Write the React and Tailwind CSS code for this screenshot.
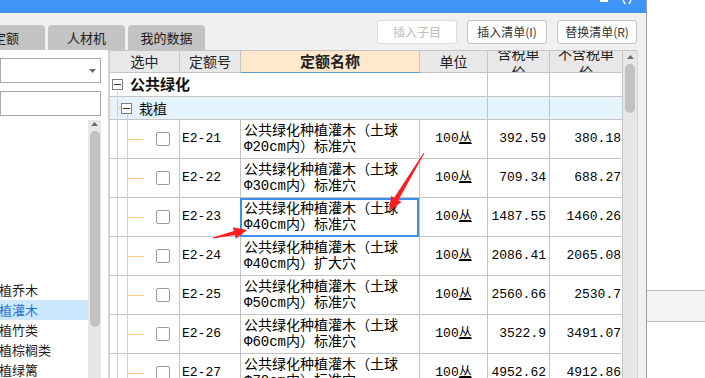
import React from 'react';

const rows = [
  { code: 'E2-21', size: '20', hole: '标准穴', p1: '392.59', p2: '380.18' },
  { code: 'E2-22', size: '30', hole: '标准穴', p1: '709.34', p2: '688.27' },
  { code: 'E2-23', size: '40', hole: '标准穴', p1: '1487.55', p2: '1460.26', selected: true },
  { code: 'E2-24', size: '40', hole: '扩大穴', p1: '2086.41', p2: '2065.08' },
  { code: 'E2-25', size: '50', hole: '标准穴', p1: '2560.66', p2: '2530.7' },
  { code: 'E2-26', size: '60', hole: '标准穴', p1: '3522.9', p2: '3491.07' },
  { code: 'E2-27', size: '70', hole: '标准穴', p1: '4952.62', p2: '4912.86' },
];

const categories = ['植乔木', '植灌木', '植竹类', '植棕榈类', '植绿篱'];

const TREE = '#ffc77d';

function MinusBox() {
  return (
    <div className="w-[11px] h-[11px] border border-[#808080] bg-white flex items-center justify-center">
      <div className="w-[7px] h-px bg-[#333]" />
    </div>
  );
}

function UpArrow() {
  return (
    <svg width="7" height="4" viewBox="0 0 7 4">
      <polygon points="0,4 3.5,0 7,4" fill="#6b6b6b" />
    </svg>
  );
}

function DataRow({ row }) {
  return (
    <div className="flex h-[39px] border-b border-[#c4c4c4] shrink-0">
      <div className="relative w-[70px] border-r border-[#c4c4c4] flex items-center pl-[46px]">
        <svg className="absolute left-0 top-0" width="46" height="39">
          <line x1="7.5" y1="0" x2="7.5" y2="39" stroke={TREE} />
          <line x1="17.5" y1="0" x2="17.5" y2="39" stroke={TREE} />
          <line x1="18" y1="19.5" x2="33" y2="19.5" stroke={TREE} />
        </svg>
        <div className="w-[14px] h-[14px] border border-[#9a9a9a] rounded-[2px] bg-white" />
      </div>
      <div className="w-[61px] border-r border-[#c4c4c4] flex items-center pl-[2px] font-['Liberation_Mono',monospace] text-[13px] text-black">
        {row.code}
      </div>
      <div className="relative w-[179px] border-r border-[#c4c4c4] flex items-center pl-[3px] font-['Liberation_Mono','Noto_Sans_CJK_SC',monospace] text-[14px] leading-[16px] text-black">
        <div>
          公共绿化种植灌木（土球
          <br />
          Φ{row.size}cm内）{row.hole}
        </div>
        {row.selected && (
          <div className="absolute left-[-1px] top-0 right-0 bottom-[-1px] border-2 border-[#3d8ee8]" />
        )}
      </div>
      <div className="w-[68px] border-r border-[#c4c4c4] flex items-center justify-center font-['Liberation_Mono','Noto_Sans_CJK_SC',monospace] text-[13px] text-black">
        100<span className="underline">丛</span>
      </div>
      <div className="w-[62px] border-r border-[#c4c4c4] flex items-center justify-end pr-[3px] font-['Liberation_Mono',monospace] text-[13px] text-black">
        {row.p1}
      </div>
      <div className="w-[73px] border-r border-[#c4c4c4] flex items-center justify-end pr-[1px] font-['Liberation_Mono',monospace] text-[13px] text-black">
        {row.p2}
      </div>
    </div>
  );
}

export default function App() {
  return (
    <div className="relative w-[705px] h-[378px] overflow-hidden bg-white flex font-['Noto_Sans_CJK_SC',sans-serif] text-[#222]">
      {/* dialog */}
      <div className="w-[647px] h-full flex flex-col border-r border-[#9c9c9c] shrink-0">
        {/* title bar */}
        <div className="h-[13px] bg-[#3f95f7] flex justify-end pr-[14px] shrink-0">
          <svg width="32" height="13" viewBox="0 0 32 13">
            <rect x="0" y="0" width="8" height="2" fill="#fff" />
            <line x1="23" y1="0" x2="25" y2="4" stroke="#fff" strokeWidth="1.5" />
            <line x1="31" y1="0" x2="29" y2="4" stroke="#fff" strokeWidth="1.5" />
          </svg>
        </div>

        {/* toolbar */}
        <div className="h-[37px] bg-[#f0f0f0] flex justify-between shrink-0">
          <div className="self-end flex gap-[3px] text-[13px] text-[#1a1a1a]">
            <div className="ml-[-33px] w-[78px] h-[25px] bg-[#c3c3c3] rounded-t-[4px] flex items-center justify-center">定额</div>
            <div className="w-[77px] h-[25px] bg-[#c3c3c3] rounded-t-[4px] flex items-center justify-center">人材机</div>
            <div className="w-[77px] h-[25px] bg-[#c3c3c3] rounded-t-[4px] flex items-center justify-center">我的数据</div>
          </div>
          <div className="self-start mt-[7px] pr-[9px] flex gap-[10px] text-[12px]">
            <div className="w-[80px] h-[24px] border border-[#dedede] rounded-[3px] bg-white flex items-center justify-center text-[#bdbdbd]">插入子目</div>
            <div className="w-[80px] h-[24px] border border-[#c6c6c6] rounded-[3px] bg-white flex items-center justify-center text-[#333]">插入清单(I)</div>
            <div className="w-[80px] h-[24px] border border-[#c6c6c6] rounded-[3px] bg-white flex items-center justify-center text-[#333]">替换清单(R)</div>
          </div>
        </div>

        {/* body */}
        <div className="flex-1 flex min-h-0">
          {/* left panel */}
          <div className="w-[110px] h-full bg-white border-r-2 border-[#d2d2d2] flex flex-col shrink-0">
            <div className="mt-[8px] w-[101px] h-[25px] border border-[#a8a8a8] flex items-center justify-end pr-[4px] shrink-0">
              <svg width="7" height="4" viewBox="0 0 7 4">
                <polygon points="0,0 7,0 3.5,4" fill="#6b6b6b" />
              </svg>
            </div>
            <div className="mt-[8px] w-[101px] h-[25px] border border-[#a8a8a8] shrink-0" />
            <div className="mt-[4px] flex flex-1 min-h-0 w-[101px]">
              <div className="w-[88px] pt-[160px] flex flex-col text-[13px] overflow-hidden">
                {categories.map((c, i) => (
                  <div
                    key={c}
                    className={`h-[20px] shrink-0 flex items-center ml-[-1px] whitespace-nowrap ${i === 1 ? 'bg-[#cce8ff] text-[#1b74d4]' : 'text-[#1a1a1a]'}`}
                  >
                    {c}
                  </div>
                ))}
              </div>
              <div className="w-[13px] bg-[#e7e7e7] flex flex-col items-center pt-[2px]">
                <UpArrow />
                <div className="mt-[5px] w-[10px] h-[196px] rounded-full bg-[#c2c2c2]" />
              </div>
            </div>
          </div>

          {/* grid */}
          <div className="flex-1 flex min-w-0">
            <div className="w-[513px] flex flex-col overflow-hidden shrink-0">
              {/* header */}
              <div className="flex h-[23px] shrink-0 text-[14px] text-[#222]">
                <div className="w-[70px] border-t border-b border-r border-[#c4c4c4] bg-[#e8e8e8] flex items-center justify-center">选中</div>
                <div className="w-[61px] border-t border-b border-r border-[#c4c4c4] bg-[#e8e8e8] flex items-center justify-center">定额号</div>
                <div className="w-[179px] border-t border-r border-[#c4c4c4] border-b border-b-[#5b9bd5] bg-[#ffe8cb] flex items-center justify-center font-bold text-[15px]">定额名称</div>
                <div className="w-[68px] border-t border-b border-r border-[#c4c4c4] bg-[#e8e8e8] flex items-center justify-center">单位</div>
                <div className="w-[62px] border-t border-b border-r border-[#c4c4c4] bg-[#e8e8e8] flex items-center justify-center overflow-hidden leading-[18px] text-center">
                  <div>含税单<br />价</div>
                </div>
                <div className="w-[73px] border-t border-b border-r border-[#c4c4c4] bg-[#e8e8e8] flex items-center justify-center overflow-hidden leading-[18px] text-center">
                  <div>不含税单<br />价</div>
                </div>
              </div>

              {/* group row */}
              <div className="flex h-[24px] border-b border-[#c4c4c4] shrink-0 bg-white">
                <div className="relative w-[378px] border-r border-[#c4c4c4] flex items-center pl-[2px]">
                  <svg className="absolute left-0 top-0" width="20" height="24">
                    <line x1="7.5" y1="18" x2="7.5" y2="24" stroke={TREE} />
                  </svg>
                  <MinusBox />
                  <span className="ml-[7px] font-bold text-[15px] text-[#111]">公共绿化</span>
                </div>
                <div className="w-[62px] border-r border-[#c4c4c4]" />
                <div className="w-[73px] border-r border-[#c4c4c4]" />
              </div>

              {/* sub group row */}
              <div className="flex h-[23px] border-b border-[#c4c4c4] shrink-0 bg-[#e5f3fd]">
                <div className="relative w-[378px] border-r border-[#c4c4c4] flex items-center pl-[11px]">
                  <svg className="absolute left-0 top-0" width="24" height="23">
                    <line x1="7.5" y1="0" x2="7.5" y2="23" stroke={TREE} />
                    <line x1="7" y1="11.5" x2="11" y2="11.5" stroke={TREE} />
                    <line x1="17.5" y1="17" x2="17.5" y2="23" stroke={TREE} />
                  </svg>
                  <MinusBox />
                  <span className="ml-[7px] text-[14px] text-[#111]">栽植</span>
                </div>
                <div className="w-[62px] border-r border-[#c4c4c4]" />
                <div className="w-[73px] border-r border-[#c4c4c4]" />
              </div>

              {rows.map((r) => (
                <DataRow key={r.code} row={r} />
              ))}
            </div>

            {/* vertical scrollbar */}
            <div className="w-[14px] bg-[#e7e7e7] border-t border-[#c4c4c4] flex flex-col items-center pt-[4px] shrink-0">
              <UpArrow />
              <div className="mt-[5px] w-[10px] h-[49px] rounded-full bg-[#c2c2c2]" />
            </div>
            <div className="flex-1 bg-[#f0f0f0] border-l border-[#d6d6d6]" />
          </div>
        </div>
      </div>

      {/* outside area */}
      <div className="flex-1">
        <div className="mt-[290px] h-[32px] bg-[#f3f3f3] border-t border-b border-[#bdbdbd]" />
      </div>

      {/* red annotation arrows */}
      <svg className="absolute left-0 top-0 pointer-events-none" width="705" height="378">
        <polygon
          points="424.4,153.3 398.3,200.3 401.4,202.1 389,211 391.1,195.9 394.1,197.7 423.6,152.7"
          fill="#ff1d1d"
        />
        <polygon
          points="213.1,238.6 234.8,235.1 235.7,238.8 247,230 232.9,227.2 233.8,230.9 212.9,237.4"
          fill="#ff1d1d"
        />
      </svg>
    </div>
  );
}
